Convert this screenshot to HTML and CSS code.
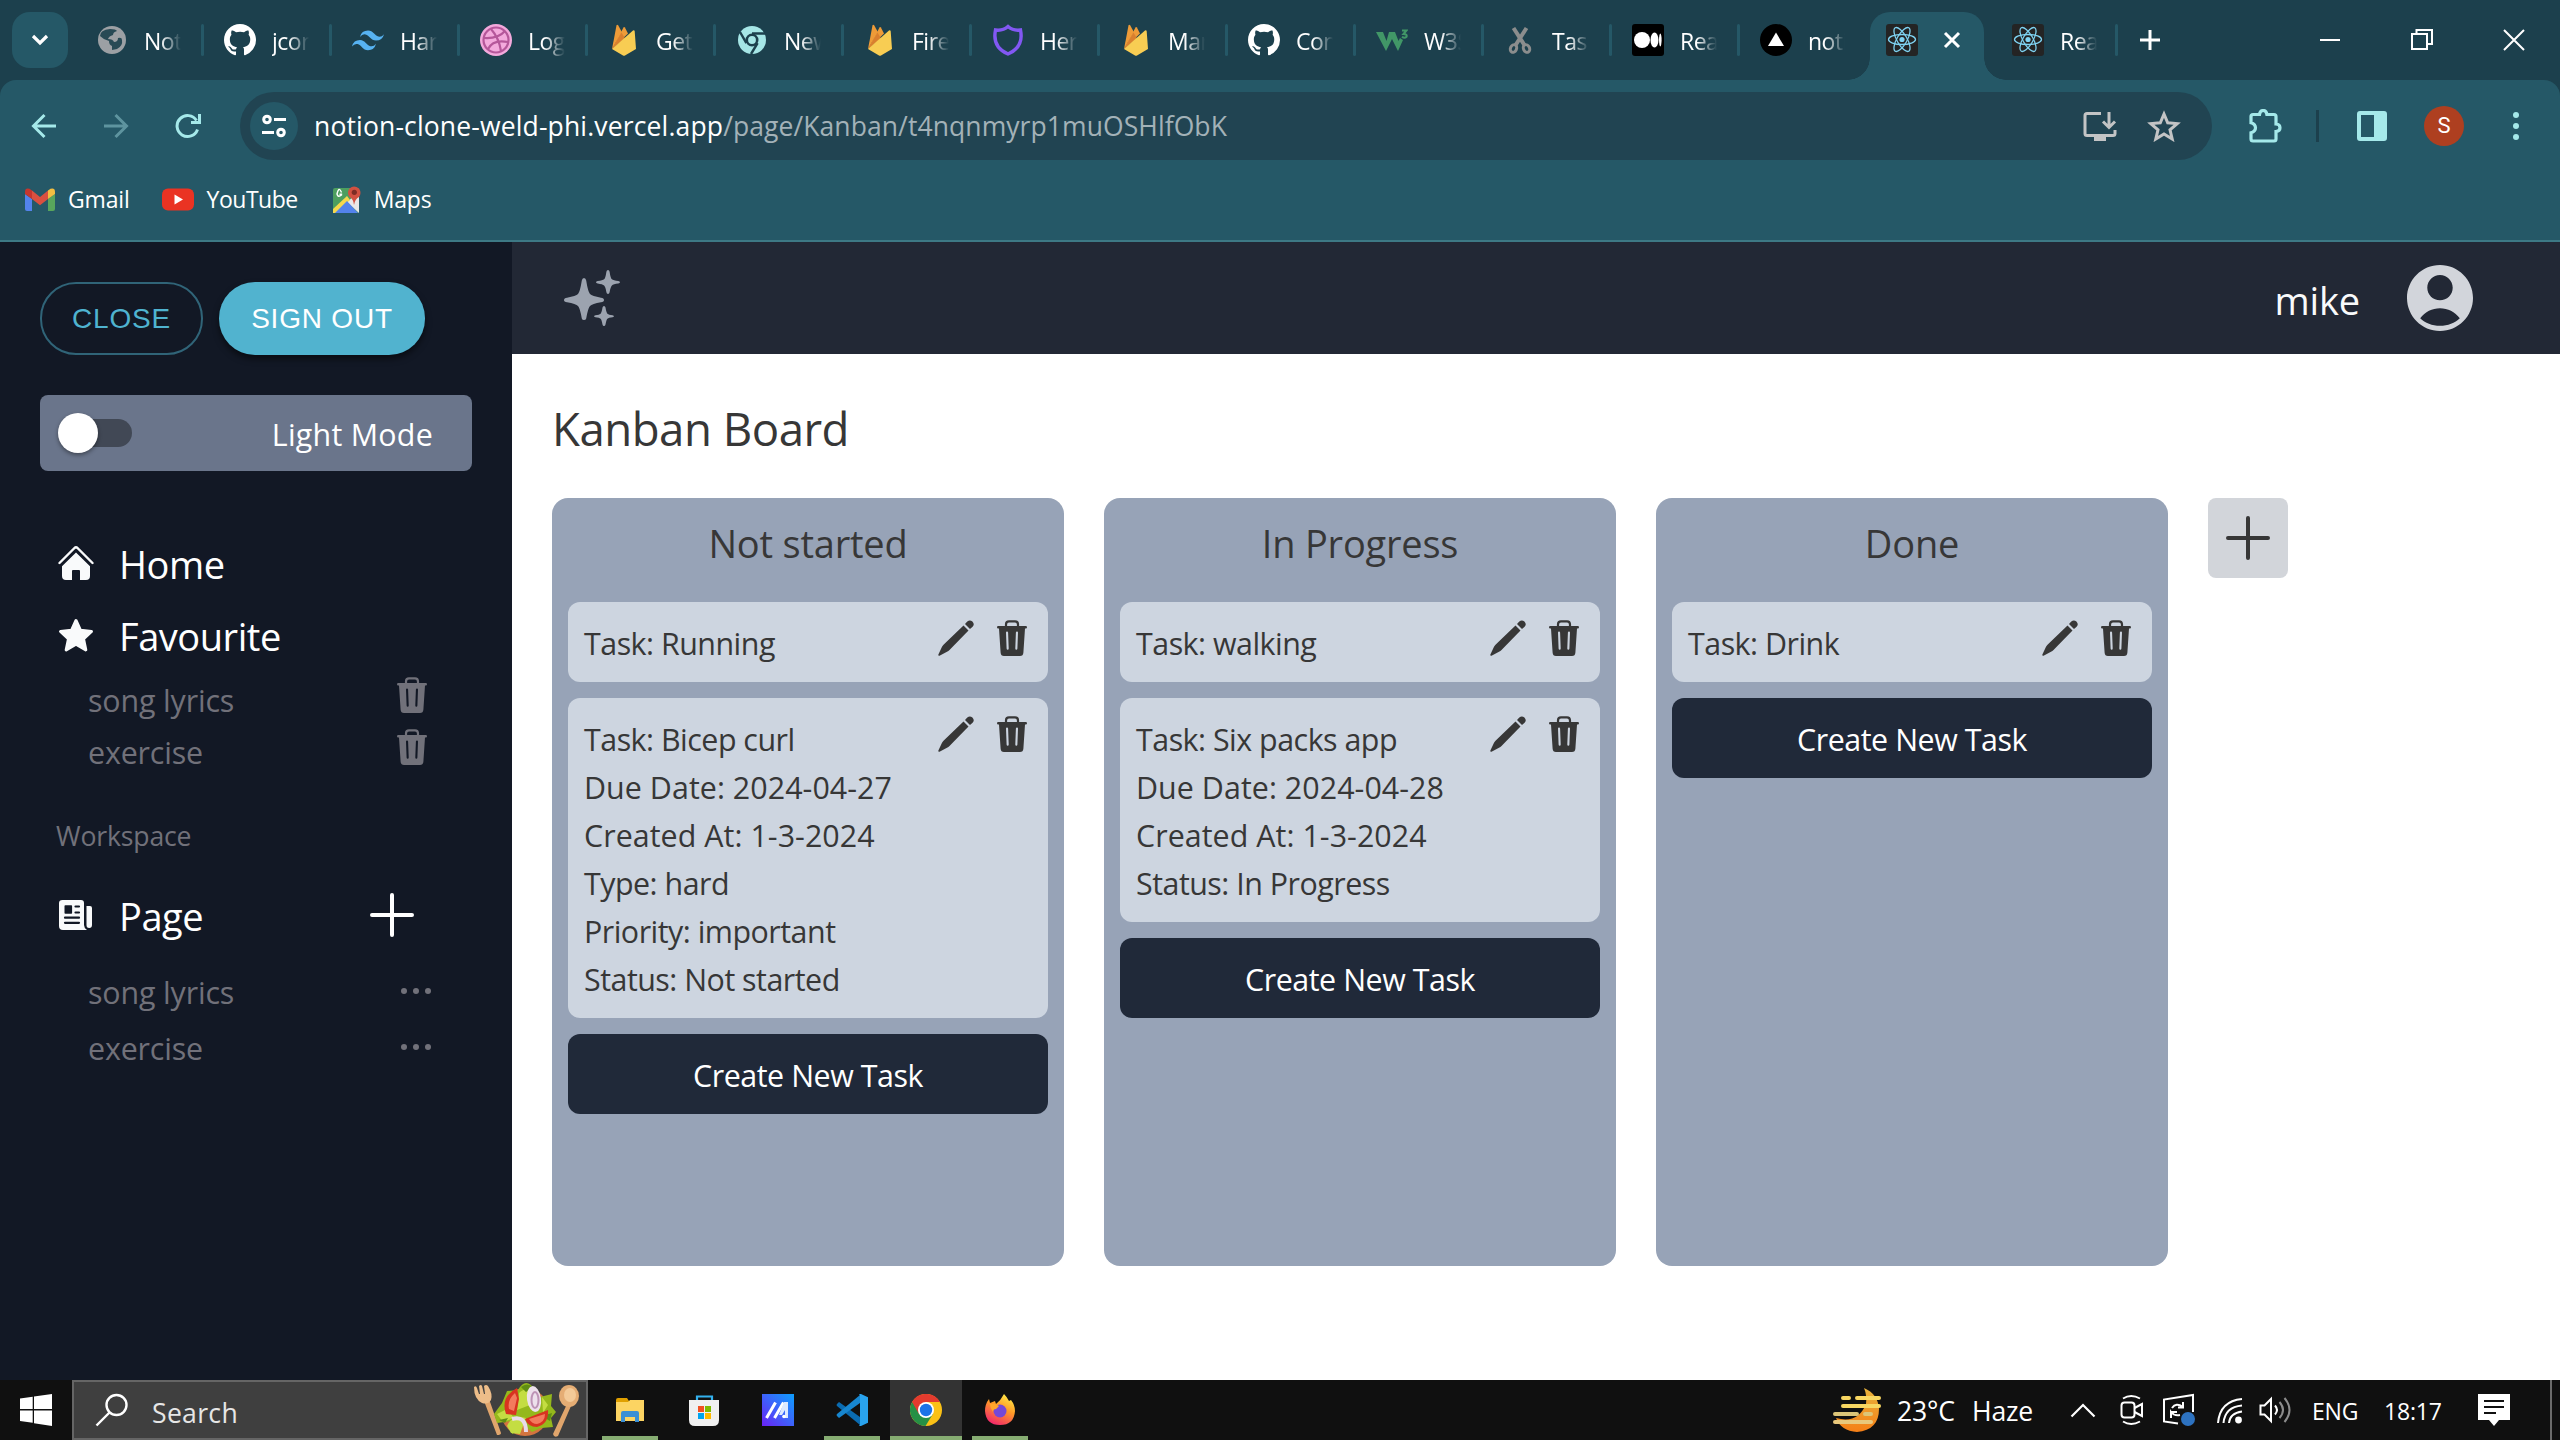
FILE: index.html
```html
<!DOCTYPE html>
<html lang="en">
<head>
<meta charset="utf-8">
<title>Kanban Board</title>
<link rel="stylesheet" href="styles.css">
</head>
<body>
<svg class="defs" width="0" height="0" aria-hidden="true">
  <symbol id="github" viewBox="0 0 16 16"><path fill="#fff" d="M8 0C3.58 0 0 3.58 0 8c0 3.54 2.29 6.53 5.47 7.59.4.07.55-.17.55-.38 0-.19-.01-.82-.01-1.49-2.01.37-2.53-.49-2.69-.94-.09-.23-.48-.94-.82-1.13-.28-.15-.68-.52-.01-.53.63-.01 1.08.58 1.23.82.72 1.21 1.87.87 2.33.66.07-.52.28-.87.51-1.07-1.78-.2-3.64-.89-3.64-3.95 0-.87.31-1.59.82-2.15-.08-.2-.36-1.02.08-2.12 0 0 .67-.21 2.2.82.64-.18 1.32-.27 2-.27s1.36.09 2 .27c1.53-1.04 2.2-.82 2.2-.82.44 1.1.16 1.92.08 2.12.51.56.82 1.27.82 2.15 0 3.07-1.87 3.75-3.65 3.95.29.25.54.73.54 1.48 0 1.07-.01 1.93-.01 2.2 0 .21.15.46.55.38A8.01 8.01 0 0 0 16 8c0-4.42-3.58-8-8-8z"/></symbol>
  <symbol id="firebase" viewBox="0 0 32 32"><path fill="#ee9b38" d="M4 25L8.500 1.500q.8-1.600 1.800 0l3.500 6.500z"/><path fill="#ee9b38" d="M4 25L15.500 3.500q.7-1 1.400 0L20 9.500z"/><path fill="#d97f2e" d="M4 25l9.500-16.500 3.500 6z"/><path fill="#f8cd53" d="M4 25L25 6.500q1.400-.8 1.700.7L28 25l-11 6.500q-1 .6-2 0z"/></symbol>
  <symbol id="react" viewBox="0 0 32 32"><rect width="32" height="32" rx="3" fill="#242424"/><g fill="none" stroke="#7fd3f2" stroke-width="1.300"><ellipse cx="16" cy="15.500" rx="13.500" ry="5"/><ellipse cx="16" cy="15.500" rx="13.500" ry="5" transform="rotate(60 16 15.500)"/><ellipse cx="16" cy="15.500" rx="13.500" ry="5" transform="rotate(120 16 15.500)"/></g><circle cx="16" cy="15.500" r="2.600" fill="#7fd3f2"/></symbol>
  <symbol id="trash" viewBox="0 0 30 36"><path fill="none" stroke="currentColor" stroke-width="2.200" d="M9 7V4.500Q9 1.300 12 1.300h6q3 0 3 3.200V7"/><path fill="currentColor" fill-rule="evenodd" d="M1.200 6h27.600q1.200 0 1.200 1.200t-1.200 1.300h-.8l-1.600 24Q26.200 36 23 36H7q-3.200 0-3.400-3.500L2 8.500h-.8Q0 8.400 0 7.200T1.200 6zM9 12.600l.6 16q.1 1.200 1.100 1.200t1-1.200l-.6-16q-.1-1-1.100-1t-1 1zm9.900 0l-.6 16q0 1.200 1 1.200t1.100-1.200l.6-16q0-1-1-1t-1.100 1z"/></symbol>
  <symbol id="pencil" viewBox="0 0 36 36"><path fill="currentColor" d="M25.500 5.500l5 5L11.500 30q-1 1-2.500 1.800L1.500 35.700Q0 36.200.4 34.500L4 26.800q.8-1.500 2-2.500zM27 4l2.300-2.400Q31.800-.6 34.400 1.600 37 4.300 34.600 6.800L32 9z"/></symbol>
  <symbol id="plus" viewBox="0 0 44 44"><path fill="none" stroke="currentColor" stroke-width="4" stroke-linecap="round" d="M22 2v40M2 22h40"/></symbol>
  <symbol id="dots" viewBox="0 0 30 6"><g fill="currentColor"><circle cx="3" cy="3" r="3"/><circle cx="15" cy="3" r="3"/><circle cx="27" cy="3" r="3"/></g></symbol>
</svg>

<div class="screen">
  <header class="browser">
    <div class="tabstrip">
      <span class="tab-search"><svg width="20" height="12" viewBox="0 0 20 12"><path d="M3 2l7 7 7-7" fill="none" stroke="#fff" stroke-width="3.200"/></svg></span>
      <div class="tab"><svg class="fav" viewBox="0 0 32 32"><circle cx="16" cy="16" r="14" fill="#9ca0a4"/><path fill="#1c404d" d="M14 5q6 0 7 2-4 1-4 4-4 1-5 4 5 0 6 3 4 0 4-4 4-1 4 2 1 6-5 9l-5 1v-4q-3-1-3-5-5-1-9-5 0-6 10-7z" opacity=".9"/></svg><span class="label">Notion</span></div>
      <div class="tab"><svg class="fav"><use href="#github"/></svg><span class="label">jcom</span></div>
      <div class="tab"><svg class="fav" viewBox="0 0 32 32"><path fill="#57b3f2" d="M16 6.500q-6.400 0-8 6.400 2.400-3.200 5.600-2.400c1.800.5 3.100 1.800 4.600 3.300 1.400 1.400 3.200 2.800 5.800 2.800q6.400 0 8-6.400-2.400 3.200-5.600 2.400c-1.800-.5-3.100-1.800-4.600-3.300-1.400-1.400-3.200-2.800-5.800-2.800zM8 16.100q-6.400 0-8 6.400 2.400-3.200 5.600-2.400c1.800.5 3.100 1.800 4.600 3.300 1.400 1.400 3.200 2.800 5.800 2.800q6.400 0 8-6.400-2.400 3.200-5.600 2.400c-1.800-.5-3.100-1.800-4.600-3.300-1.400-1.400-3.200-2.800-5.800-2.800z"/></svg><span class="label">Har</span></div>
      <div class="tab"><svg class="fav" viewBox="0 0 32 32"><circle cx="16" cy="16" r="16" fill="#f3a9dc"/><g fill="none" stroke="#b5579a" stroke-width="2.200"><circle cx="16" cy="16" r="12.500"/><path d="M11 5q8 9 10 22M4 14q14 1 21-7M8 25q5-10 20-7"/></g></svg><span class="label">Logo</span></div>
      <div class="tab"><svg class="fav"><use href="#firebase"/></svg><span class="label">Get s</span></div>
      <div class="tab"><svg class="fav" viewBox="0 0 32 32"><circle cx="16" cy="16" r="14" fill="#a5e6e6"/><circle cx="16" cy="16" r="5.200" fill="#a5e6e6" stroke="#1c404d" stroke-width="2.600"/><path stroke="#1c404d" stroke-width="2.400" fill="none" d="M16 9.500h13M10.400 19.200L4 8M21.600 19.200L15 30"/></svg><span class="label">New</span></div>
      <div class="tab"><svg class="fav"><use href="#firebase"/></svg><span class="label">Fireb</span></div>
      <div class="tab"><svg class="fav" viewBox="0 0 32 32"><path fill="none" stroke="#8258f3" stroke-width="3.400" d="M16 2.500q5 4.500 12.500 3.500 3.500 17-12.500 24Q0 23 3.500 6 11 7 16 2.500z"/></svg><span class="label">Hero</span></div>
      <div class="tab"><svg class="fav"><use href="#firebase"/></svg><span class="label">Man</span></div>
      <div class="tab"><svg class="fav"><use href="#github"/></svg><span class="label">Com</span></div>
      <div class="tab"><svg class="fav" viewBox="0 0 32 32"><path fill="#419767" d="M0 8h7l3.500 9L13 8h6l3.500 9 1.500-3 3 2-5 11-6-12-6 12z"/><path fill="none" stroke="#419767" stroke-width="2" d="M26 6.500h4.500l-3 3.500q4 0 3 2.800-2 2-4.500 0"/></svg><span class="label">W3S</span></div>
      <div class="tab"><svg class="fav" viewBox="0 0 32 32"><g fill="none" stroke="#8b8d8d" stroke-width="3"><path d="M9.500 4L21 22M22.500 4L11 22" stroke-width="4"/><ellipse cx="9.500" cy="24.500" rx="3" ry="4" transform="rotate(25 9.500 24.500)"/><ellipse cx="22.500" cy="24.500" rx="3" ry="4" transform="rotate(-25 22.500 24.500)"/></g></svg><span class="label">Task</span></div>
      <div class="tab"><svg class="fav" viewBox="0 0 32 32"><rect width="32" height="32" rx="3"/><g fill="#fff"><circle cx="10" cy="16" r="8"/><ellipse cx="22.500" cy="16" rx="4" ry="7.500"/><ellipse cx="28.300" cy="16" rx="1.300" ry="6.500"/></g></svg><span class="label">Rea</span></div>
      <div class="tab no-sep"><svg class="fav" viewBox="0 0 32 32"><circle cx="16" cy="16" r="16"/><path fill="#fff" d="M16 8.500l8 13.500H8z"/></svg><span class="label">noti</span></div>
      <div class="tab-active"><svg class="fav"><use href="#react"/></svg><svg width="18" height="18" viewBox="0 0 18 18"><path d="M2 2l14 14M16 2L2 16" stroke="#fff" stroke-width="3"/></svg></div>
      <div class="tab tab-last"><svg class="fav"><use href="#react"/></svg><span class="label">Rea</span></div>
      <svg class="new-tab" width="22" height="22" viewBox="0 0 22 22"><path d="M11 1v20M1 11h20" stroke="#fff" stroke-width="3"/></svg>
      <div class="window-controls">
        <svg width="22" height="22" viewBox="0 0 22 22"><path d="M1 11h20" stroke="#fff" stroke-width="2"/></svg>
        <svg width="22" height="22" viewBox="0 0 22 22"><path d="M1 5h15v15H1zM5.500 5V1H21v14h-4.500" fill="none" stroke="#fff" stroke-width="2"/></svg>
        <svg width="22" height="22" viewBox="0 0 22 22"><path d="M1 1l20 20M21 1L1 21" stroke="#fff" stroke-width="2"/></svg>
      </div>
    </div>
    <div class="toolbar">
      <div class="nav-buttons">
        <svg width="26" height="26" viewBox="0 0 26 26"><path d="M25 13H3M13.500 2L2.500 13l11 11" fill="none" stroke="#a5e9ea" stroke-width="3"/></svg>
        <svg width="26" height="26" viewBox="0 0 26 26"><path d="M1 13h22M12.500 2l11 11-11 11" fill="none" stroke="#5e949f" stroke-width="3"/></svg>
        <svg width="26" height="26" viewBox="0 0 26 26"><path d="M22.500 16.500A10.500 10.500 0 1 1 21.500 7.500M24.500 1v8.500H16" fill="none" stroke="#a5e9ea" stroke-width="3"/></svg>
      </div>
      <div class="omnibox">
        <span class="site-info"><svg width="24" height="24" viewBox="0 0 24 24"><g fill="none" stroke="#fff" stroke-width="3"><circle cx="5" cy="5.500" r="3.300"/><path d="M12 5.500h12M0 18.500h12"/><circle cx="19" cy="18.500" r="3.300"/></g></svg></span>
        <span class="url"><span class="host">notion-clone-weld-phi.vercel.app</span><span class="path">/page/Kanban/t4nqnmyrp1muOSHlfObK</span></span>
        <span class="omni-icons">
          <svg width="34" height="30" viewBox="0 0 34 30"><path fill="none" stroke="#c3c4c5" stroke-width="3" d="M18 2.500H4Q2 2.500 2 4.500v18q0 2 2 2h26q2 0 2-2V19M26 1v15M20 10.500l6 6 6-6"/><path fill="#c3c4c5" d="M11 25h12v5H11z"/></svg>
          <svg width="34" height="32" viewBox="0 0 34 32"><path fill="none" stroke="#c3c4c5" stroke-width="3" stroke-linejoin="miter" d="M17 4l3.700 8.800 9.500.8-7.200 6.200 2.200 9.200L17 24l-8.200 5 2.200-9.200-7.200-6.200 9.500-.8z"/></svg>
        </span>
      </div>
      <div class="actions">
        <svg width="34" height="34" viewBox="0 0 34 34"><path fill="none" stroke="#a5e9ea" stroke-width="3.200" d="M3 7.500Q3 5.500 5 5.500h6.500q.5-4 3.700-4t3.700 4H26q2 0 2 2V15q4 .3 4 3.700t-4 3.800V30q0 2-2 2H5q-2 0-2-2v-6.200q4.500-1.300 4.500-5T3 13.700z"/></svg>
        <i class="bar"></i>
        <svg width="30" height="30" viewBox="0 0 30 30"><path fill="#a5e9ea" fill-rule="evenodd" d="M3 0h24q3 0 3 3v24q0 3-3 3H3q-3 0-3-3V3q0-3 3-3zm1 4v22h13V4z"/></svg>
        <span class="profile">S</span>
        <svg width="6" height="30" viewBox="0 0 6 30"><g fill="#a5e9ea"><circle cx="3" cy="4" r="3"/><circle cx="3" cy="15" r="3"/><circle cx="3" cy="26" r="3"/></g></svg>
      </div>
    </div>
    <div class="bookmarks">
      <svg width="30" height="24" viewBox="0 0 30 24"><path fill="#5383ec" d="M0 6l7 5v12H2q-2 0-2-2z"/><path fill="#58a55c" d="M23 11l7-5v15q0 2-2 2h-5z"/><path fill="#c5362e" d="M0 6V4Q0-.5 4.500.8L7 2.500V11L0 6z"/><path fill="#d95040" d="M7 2.500l8 6.500 8-6.500V11l-8 6.300L7 11z"/><path fill="#f2be42" d="M23 11V2.500L25.500.8Q30-.5 30 4v2z"/></svg><span class="gmail">Gmail</span>
      <svg width="32" height="24" viewBox="0 0 32 24"><rect y=".5" width="32" height="22" rx="6" fill="#ea3323"/><path fill="#fff" d="M12.500 6.500v10l8.500-5z"/></svg><span class="youtube">YouTube</span>
      <svg width="28" height="28" viewBox="0 0 28 28"><rect y="2" width="26" height="25" rx="2" fill="#4d9e5f"/><path fill="#e8e8e8" d="M14 16L26 6v21z"/><path fill="#f6d84c" d="M0 27v-4L14 10l3 4L3 27z"/><path fill="#5383ec" d="M2 27l12-12 11 12z"/><path fill="none" stroke="#fff" stroke-width="1.400" d="M8.500 6.500Q6-.5 4 8q1 4 4.500 1V8.200H6.500"/><path fill="#d15141" d="M21 19q-.5-6-4.500-8-3-4 0-8.500Q21-1.500 26 2.500q3 4.500 0 8.500-4 2-5 8z"/><circle cx="21.300" cy="6.300" r="2.600" fill="#7d2d26"/></svg><span>Maps</span>
    </div>
  </header>

  <div class="app">
    <aside class="sidebar">
      <div class="buttons"><button class="btn outlined">CLOSE</button><button class="btn contained">SIGN OUT</button></div>
      <div class="mode"><span class="switch"><i class="thumb"></i></span><span class="mode-label">Light Mode</span></div>
      <nav class="menu">
        <div class="item"><svg width="36" height="34" viewBox="0 0 36 34"><path fill="none" stroke="#f9fafb" stroke-width="2.400" stroke-linecap="round" stroke-linejoin="round" d="M1.500 17L16.500 2q1.500-1.300 3 0L34.500 17"/><path fill="#f9fafb" d="M18 6.500l14 13.800V30q0 4-4 4h-6v-9q0-1-1-1h-6q-1 0-1 1v9H8q-4 0-4-4v-9.700z"/></svg><span>Home</span></div>
        <div class="item"><svg width="36" height="34" viewBox="0 0 36 34"><path fill="#f9fafb" stroke="#f9fafb" stroke-width="3" stroke-linejoin="round" d="M18 2.500l4.500 9.800 11 1.200-8 7.400 2.300 11L18 26.300l-9.800 5.600 2.300-11-8-7.400 11-1.200z"/></svg><span>Favourite</span></div>
        <div class="sub fav-sub"><span>song lyrics</span><svg width="30" height="36"><use href="#trash"/></svg></div>
        <div class="sub fav-sub"><span>exercise</span><svg width="30" height="36"><use href="#trash"/></svg></div>
        <div class="caption">Workspace</div>
        <div class="item"><svg width="36" height="32" viewBox="0 0 36 32"><path fill="#f9fafb" fill-rule="evenodd" d="M4.500 1H23q3 0 3 3v22q0 3 3 5H5q-4 0-4-4V4q0-3 3.500-3zM6.500 7v7q0 .8.800.8h6q.8 0 .8-.8V7q0-.8-.8-.8h-6q-.8 0-.8.800z"/><path stroke="#121825" stroke-width="2.200" stroke-linecap="round" d="M17.500 7.500h3.500M17.500 13.500h3.500M7 18.700h14M7 23.800h14"/><path fill="#f9fafb" d="M28.500 7h3.500q2 0 2 2v17q0 3-2.800 3t-2.700-3z"/></svg><span>Page</span><svg class="add" width="44" height="44"><use href="#plus"/></svg></div>
        <div class="sub page-sub first"><span>song lyrics</span><svg width="30" height="6"><use href="#dots"/></svg></div>
        <div class="sub page-sub"><span>exercise</span><svg width="30" height="6"><use href="#dots"/></svg></div>
      </nav>
    </aside>
    <main class="main">
      <div class="topbar">
        <svg width="56" height="56" viewBox="0 0 56 56"><path fill="#9ca3af" d="M20 8q1.800 0 2.200 2.600Q24 22 26 24t11 3.700q3 .3 3 2.300t-3 2.300Q28 34 26 36t-3.800 12.500Q21.800 50 20 50t-2.200-1.500Q16 38 14 36T3 32.300Q0 32 0 30t3-2.300Q12 26 14 24t3.800-13.400Q18.200 8 20 8zM44 0q1.300 0 1.600 1.700.9 6.300 2.300 7.600t6.400 1.800q1.700.3 1.700 1.200t-1.700 1.200q-5 .6-6.400 2t-2.300 6.800Q45.300 24 44 24t-1.600-1.700q-.9-5.500-2.300-6.800t-6.400-2Q32 13.200 32 12.300t1.700-1.200q5-.5 6.400-1.800t2.300-7.600Q42.700 0 44 0zM40 36q1.200 0 1.500 1.500.8 5 1.900 6.200t5.200 1.500q1.400.3 1.400 1t-1.400 1q-4.100.4-5.200 1.500t-1.900 5.800Q41.200 56 40 56t-1.500-1.500q-.8-4.700-1.900-5.800t-5.200-1.500q-1.400-.3-1.400-1t1.400-1q4.100-.3 5.200-1.500t1.900-6.200Q38.800 36 40 36z"/></svg>
        <div class="user"><span>mike</span><svg width="66" height="66" viewBox="2 2 20 20"><path fill="#d2d5db" d="M12 2C6.480 2 2 6.480 2 12s4.480 10 10 10 10-4.480 10-10S17.520 2 12 2zm0 3c2.120 0 3.850 1.730 3.850 3.900S14.120 12.700 12 12.700 8.150 11.070 8.150 8.900 9.880 5 12 5zm0 15.400c-2.400 0-4.500-.9-6-2.300 1.500-1.900 3.600-3 6-3s4.500 1.100 6 3c-1.500 1.400-3.600 2.300-6 2.300z"/></svg></div>
      </div>
      <h1>Kanban Board</h1>
      <div class="board">
        <section class="column"><h2>Not started</h2>
          <article class="card"><div class="fields"><p>Task: Running</p></div><div class="tools"><svg width="36" height="36"><use href="#pencil"/></svg><svg width="30" height="36"><use href="#trash"/></svg></div></article>
          <article class="card"><div class="fields"><p>Task: Bicep curl</p><p class="date">Due Date: 2024-04-27</p><p class="date">Created At: 1-3-2024</p><p>Type: hard</p><p>Priority: important</p><p>Status: Not started</p></div><div class="tools"><svg width="36" height="36"><use href="#pencil"/></svg><svg width="30" height="36"><use href="#trash"/></svg></div></article>
          <button class="create">Create New Task</button></section>
        <section class="column"><h2>In Progress</h2>
          <article class="card"><div class="fields"><p>Task: walking</p></div><div class="tools"><svg width="36" height="36"><use href="#pencil"/></svg><svg width="30" height="36"><use href="#trash"/></svg></div></article>
          <article class="card"><div class="fields"><p>Task: Six packs app</p><p class="date">Due Date: 2024-04-28</p><p class="date">Created At: 1-3-2024</p><p>Status: In Progress</p></div><div class="tools"><svg width="36" height="36"><use href="#pencil"/></svg><svg width="30" height="36"><use href="#trash"/></svg></div></article>
          <button class="create">Create New Task</button></section>
        <section class="column"><h2>Done</h2>
          <article class="card"><div class="fields"><p>Task: Drink</p></div><div class="tools"><svg width="36" height="36"><use href="#pencil"/></svg><svg width="30" height="36"><use href="#trash"/></svg></div></article>
          <button class="create">Create New Task</button></section>
        <button class="add-column"><svg width="44" height="44"><use href="#plus"/></svg></button>
      </div>
    </main>
  </div>

  <footer class="taskbar">
    <div class="start"><svg width="32" height="32" viewBox="0 0 32 32"><path fill="#fff" d="M0 4.500L12.700 2.700V15H0zM14 2.500L32 0v15H14zM0 16.400h12.700v12.300L0 27zM14 16.400h18V32l-18-2.700z"/></svg></div>
    <div class="search">
      <svg width="34" height="34" viewBox="0 0 34 34"><circle cx="21.500" cy="12" r="10" fill="none" stroke="#fff" stroke-width="2.400"/><path d="M14.500 19.500L1.500 32.500" stroke="#fff" stroke-width="2.400"/></svg>
      <span class="search-text">Search</span>
      <svg class="salad" width="106" height="54" viewBox="0 0 106 54">
        <path fill="#e0a56c" d="M11 18l5-2 12 34q0 2-4 2zM80 51l14-30 4 2-13 30q-4 2-5-2z"/>
        <path fill="#edbd89" d="M1 4q2-2 3 1l2 6 1 0-1-8q2-2 3 0l2 8h1l-1-8q2-2 4 0 5 8 3 14-3 5-9 3Q1 16 1 4z"/><ellipse cx="96" cy="13" rx="10" ry="11" fill="#e5ad74"/><ellipse cx="97" cy="12" rx="6" ry="7" fill="#f3ca98"/>
        <circle cx="52" cy="29" r="24" fill="#d4743f"/>
        <path fill="#95b81c" d="M34 8l11-1q8-14 17 0l1 8 16-4-1 12 5 6-5 6 2 9-12 1-9 4-11-9-2 8-7 3-1-13-14 2-3-9 8-11z"/>
        <path fill="#c4dd42" d="M46 10q8-8 14 2l-3 10-13 5zM34 43q5-12 19-8l-6 16-9-1zM69 14l6 8-5 8zM24 31l10-5 7 9-11 4z"/><path fill="#5f8d14" d="M48 4q6-5 12 0l-7 5zM69 33l10-3-2 8zM26 37l9-2-3 5z"/>
        <path fill="#d83320" d="M44 5Q27 14 33 31l10 1 3-16zM52 36l23-9q1 14-11 17-9 0-12-8z"/><path fill="#f37b5d" d="M42 10q-8 7-6 16l5 2 3-13zM56 36l16-5q0 8-8 10-5 0-8-5z"/>
        <ellipse cx="61" cy="16" rx="7" ry="13" fill="#ede1ec" transform="rotate(-8 61 16)"/><ellipse cx="62" cy="17" rx="3.500" ry="8" fill="none" stroke="#bd94b6" stroke-width="2"/><path fill="none" stroke="#e8dbea" stroke-width="4" d="M39 36q14-4 14 13"/>
      </svg>
    </div>
    <div class="pinned">
      <span class="pin run"><svg width="32" height="32" viewBox="0 0 32 32"><path fill="#e0a000" d="M2 6q0-2 2-2h9l2 3v5H2z"/><path fill="#fcd462" d="M2 8h12l2-2h14v21H2z"/><path fill="#3b8fd4" d="M7 19q0-2 2-2h14q2 0 2 2v9h-4v-5H11v5H7z"/></svg></span>
      <span class="pin"><svg width="32" height="32" viewBox="0 0 32 32"><path fill="none" stroke="#33b1ee" stroke-width="2.200" d="M9 7V2.500h15V7"/><path fill="#f0f0f0" d="M1 6h30v20q0 6-6 6H7q-6 0-6-6z"/><path fill="#f25022" d="M10 12h6v6h-6z"/><path fill="#7fba00" d="M17 12h6v6h-6z"/><path fill="#00a4ef" d="M10 19h6v6h-6z"/><path fill="#ffb900" d="M17 19h6v6h-6z"/></svg></span>
      <span class="pin"><svg width="32" height="32" viewBox="0 0 32 32"><defs><linearGradient id="mi" x1="0" y1="1" x2="1" y2="0"><stop offset="0" stop-color="#6a22f5"/><stop offset=".5" stop-color="#3d62fb"/><stop offset="1" stop-color="#0c9ffd"/></linearGradient></defs><path fill="url(#mi)" d="M0 0h32v32H0z"/><path stroke="#fff" stroke-width="3" d="M4.500 24L13.500 8.500M12.500 24l9-15.500"/><path fill="#dce9ff" d="M22 8h4v16h-3v-8l-3 5h-3z"/><circle cx="22" cy="22.500" r="1.800" fill="#fff"/></svg></span>
      <span class="pin run"><svg width="32" height="32" viewBox="0 0 32 32"><path fill="#0a6bb0" d="M1 10l2-2 21 15v8L1 12q-1-1 0-2z"/><path fill="#1786cf" d="M1 22l2 2 21-15V1L1 20q-1 1 0 2z"/><path fill="#29a3ee" d="M23 0h2l7 3.200v25.600L25 32h-2q1-1 1-2V2q0-1-1-2z"/></svg></span>
      <span class="pin wide"><svg width="32" height="32" viewBox="0 0 32 32"><circle cx="16" cy="16" r="16" fill="#fbc116"/><path fill="#269045" d="M16 16L2.100 8A16 16 0 0 0 15.500 32l7.400-12z"/><path fill="#e33b2e" d="M2.100 8A16 16 0 0 1 29.900 8H16l-7 12z"/><circle cx="16" cy="16" r="8" fill="#fff"/><circle cx="16" cy="16" r="6.200" fill="#1b73e8"/></svg></span>
      <span class="pin run"><svg width="32" height="32" viewBox="0 0 32 32"><defs><linearGradient id="fx" x1=".8" y1="0" x2=".3" y2="1"><stop offset="0" stop-color="#fff14a"/><stop offset=".45" stop-color="#ff9a27"/><stop offset="1" stop-color="#f3256c"/></linearGradient></defs><path fill="url(#fx)" d="M20 0q3 3 5 7l2-1q4 5 4 11-1 14-15 14T1 17Q1 10 5 5l1 4 5-2 1 3q5-4 8-10z"/><circle cx="16" cy="17" r="6.500" fill="#7548d8"/><path fill="#ffa62b" d="M6 10q5-1 9 2l-3 3q-3 0-3 3-3-4-3-8z"/></svg></span>
    </div>
    <div class="tray">
      <svg class="t-weather" width="48" height="44" viewBox="0 0 48 44"><defs><linearGradient id="hz" x1="0" y1="0" x2="0" y2="1"><stop offset="0" stop-color="#e8b33c"/><stop offset="1" stop-color="#f57f17"/></linearGradient></defs><path fill="url(#hz)" d="M31 0q14 6 15 21 0 21-22 23Q8 43 3 30q22 6 30-14 1-9-2-16z"/><g stroke-width="4" stroke-linecap="round"><path stroke="#f8d762" d="M10 10h6M24 10h22M10 18h36"/><path stroke="#dcc578" d="M2 26h22M32 26h6"/><path stroke="#e9c87c" d="M2 34h36"/></g></svg>
      <span class="t-temp">23°C</span><span class="t-haze">Haze</span>
      <svg class="t-chev" width="26" height="15" viewBox="0 0 26 15"><path d="M1.500 13.500L13 2l11.500 11.500" fill="none" stroke="#fff" stroke-width="2.200"/></svg>
      <svg class="t-cam" width="24" height="32" viewBox="0 0 24 32"><g fill="none" stroke="#fff" stroke-width="2"><path d="M3 4.500q8-5 17 0M3 27.500q8 5 17 0"/><rect x="1.500" y="8.500" width="13" height="15" rx="3"/><path d="M14.500 14l7.500-4v12l-7.500-4"/></g></svg>
      <svg class="t-sync" width="34" height="34" viewBox="0 0 34 34"><path fill="none" stroke="#fff" stroke-width="2" d="M31 19V2L2 6.500v22l14 2"/><path fill="none" stroke="#fff" stroke-width="2" d="M10 15q4-6 11-1M21 9v5.500h-5M18 22q-6 1-9-3v6M9 19h6"/><circle cx="26" cy="26" r="7" fill="#2d72c0"/></svg>
      <svg class="t-wifi" width="26" height="28" viewBox="0 0 26 28"><g fill="none" stroke="#fff" stroke-width="2"><path d="M1 27Q3 5 25 3M6.500 27Q8 11 25 9.500M12 27q1-10 13-11.500"/></g><circle cx="21.500" cy="24" r="3.400" fill="#fff"/></svg>
      <svg class="t-vol" width="33" height="28" viewBox="0 0 33 28"><path fill="none" stroke="#fff" stroke-width="2" d="M1.500 9.500h4L12 3v22l-6.500-6.500h-4zM16 9.500q4 4.500 0 9"/><path fill="none" stroke="#8c8c8c" stroke-width="2" d="M20.500 6q7 8 0 16M25.500 2q10 12 0 24"/></svg>
      <span class="t-lang">ENG</span><span class="t-time">18:17</span>
      <svg class="t-note" width="32" height="32" viewBox="0 0 32 32"><path fill="#fff" d="M0 0h32v26H21l-5 6-5-6H0z"/><path stroke="#101010" stroke-width="2" d="M6 7h20M6 13h20M6 19h12"/></svg>
      <i class="peek"></i>
    </div>
  </footer>
</div>
</body>
</html>
```
FILE: styles.css
```css
* { box-sizing: border-box; }
body { margin: 0; background: #fff; font-family: "Open Sans", "Noto Sans", sans-serif; letter-spacing: -0.01em; }
svg { display: block; flex: none; }
h1, h2, p { margin: 0; font-weight: 400; }
button { font: inherit; letter-spacing: inherit; border: 0; padding: 0; }
.defs { position: absolute; }
.screen { width: 2560px; height: 1440px; display: flex; flex-direction: column; overflow: hidden; }

/* browser frame */
.browser { height: 242px; background: #1c404d; border-bottom: 2px solid #3d7985; color: #fff; flex: none; }
.tabstrip { height: 80px; display: flex; align-items: center; padding-left: 12px; }
.tab-search { width: 56px; height: 56px; margin-right: 8px; border-radius: 18px; background: #255867; display: flex; align-items: center; justify-content: center; }
.fav { width: 32px; height: 32px; }
.tab { width: 128px; height: 56px; padding-left: 20px; display: flex; align-items: center; font-size: 23px; flex: none; }
.label { width: 37px; margin-left: 16px; padding-top: 2px; overflow: hidden; white-space: nowrap; letter-spacing: -0.5px; -webkit-mask-image: linear-gradient(90deg, #000 45%, transparent); mask-image: linear-gradient(90deg, #000 45%, transparent); }
.tab::after { content: ""; width: 3px; height: 32px; margin-left: 20px; border-radius: 2px; background: #255867; }
.no-sep::after { visibility: hidden; }
.tab-active { position: relative; width: 114px; height: 68px; margin: 12px 8px 0 2px; padding: 0 23px 12px 16px; border-radius: 20px 20px 0 0; background: #255867; display: flex; align-items: center; justify-content: space-between; }
.tab-active::before, .tab-active::after { content: ""; position: absolute; bottom: 0; width: 22px; height: 22px; }
.tab-active::before { left: -22px; background: radial-gradient(circle at 0 0, transparent 21.500px, #255867 22px); }
.tab-active::after { right: -22px; background: radial-gradient(circle at 100% 0, transparent 21.500px, #255867 22px); }
.tab-last::after { margin-left: 18px; }
.new-tab { margin-left: 19px; }
.window-controls { margin-left: auto; padding-right: 35px; display: flex; gap: 70px; }
.toolbar { height: 92px; padding: 12px 41px 12px 31px; background: #255867; border-radius: 16px 16px 0 0; display: flex; align-items: center; }
.nav-buttons { display: flex; gap: 46px; }
.omnibox { width: 1972px; height: 68px; margin-left: 39px; padding: 0 31px 0 10px; border-radius: 34px; background: #214452; display: flex; align-items: center; }
.site-info { width: 48px; height: 48px; border-radius: 50%; background: #255867; display: flex; align-items: center; justify-content: center; }
.url { margin-left: 16px; font-size: 26.500px; white-space: nowrap; }
.host { letter-spacing: 0.150px; }
.path { color: #a3b2b8; letter-spacing: 0.080px; }
.omni-icons { margin-left: auto; display: flex; align-items: center; gap: 30px; }
.actions { margin-left: 36px; display: flex; align-items: center; }
.actions .bar { width: 3px; height: 32px; margin: 0 38px 0 34px; background: #1c404d; }
.profile { width: 40px; height: 40px; margin: 0 49px 0 37px; border-radius: 50%; background: #ae3f20; font: 22px/40px Roboto, sans-serif; text-align: center; }
.bookmarks { height: 68px; padding: 0 0 12px 25px; background: #255867; display: flex; align-items: center; gap: 13px; font-size: 23px; }
.bookmarks span { margin-top: -2px; }
.bookmarks .gmail { margin-right: 19px; }
.bookmarks .youtube { margin-right: 22px; letter-spacing: -0.500px; }

/* sidebar */
.app { flex: 1; display: flex; min-height: 0; }
.sidebar { width: 512px; padding: 40px; background: #121825; color: #fff; }
.buttons { display: flex; gap: 16px; }
.btn { height: 73px; border-radius: 36px; font: 28px "Liberation Sans", Arial, sans-serif; letter-spacing: .8px; text-align: center; }
.outlined { width: 163px; border: 2px solid #306478; color: #4fb3d0; background: none; }
.contained { width: 206px; background: #51b3cf; color: #fff; box-shadow: 0 4px 6px rgba(0, 0, 0, .5); }
.mode { height: 76px; margin-top: 40px; padding: 0 39px 0 24px; background: #6a758b; border-radius: 8px; display: flex; align-items: center; justify-content: space-between; font-size: 30.400px; }
.mode-label { padding-top: 3px; letter-spacing: .25px; }
.switch { width: 68px; height: 28px; border-radius: 14px; background: #414855; display: flex; align-items: center; }
.thumb { width: 40px; height: 40px; margin-left: -6px; border-radius: 50%; background: #fff; box-shadow: 0 2px 4px rgba(0, 0, 0, .4); }
.menu { margin-top: 56px; }
.item { height: 72px; padding: 0 58px 0 18px; display: flex; align-items: center; font-size: 38px; line-height: 72px; }
.item span { margin-left: 25px; padding-top: 2px; letter-spacing: -0.450px; }
.item .add { margin-left: auto; }
.sub { padding-left: 48px; display: flex; align-items: center; justify-content: space-between; color: #71717a; font-size: 30.400px; letter-spacing: -0.150px; }
.sub span { padding-top: 3px; }
.fav-sub { height: 52px; padding-right: 45px; }
.item + .fav-sub { margin-top: 2px; }
.fav-sub svg { margin-bottom: 9px; }
.caption { height: 48px; margin: 33px 0 21px 16px; padding-top: 2px; color: #71717a; font-size: 26.600px; line-height: 48px; }
.page-sub { height: 56px; padding-right: 41px; }
.first { margin-top: 12px; }

/* board */
.main { flex: 1; background: #fff; color: #373737; }
.topbar { height: 112px; padding: 0 87px 0 52px; background: #222835; display: flex; align-items: center; justify-content: space-between; }
.user { display: flex; align-items: center; gap: 47px; color: #f9fafb; font-size: 38px; }
.user span { padding-top: 3px; }
h1 { margin: 40px 0 40px 40px; height: 64px; padding-top: 2px; font-size: 45.600px; line-height: 64px; letter-spacing: -0.500px; }
.board { margin-left: 40px; display: flex; gap: 40px; align-items: flex-start; }
.column { width: 512px; height: 768px; padding: 16px; border-radius: 16px; background: #97a3b7; display: flex; flex-direction: column; gap: 16px; }
h2 { height: 72px; font-size: 38px; line-height: 58px; text-align: center; letter-spacing: -0.200px; }
.card { padding: 16px; border-radius: 12px; background: #cdd5e0; display: flex; justify-content: space-between; font-size: 30.400px; }
.fields p { height: 48px; padding-top: 2px; line-height: 48px; white-space: nowrap; letter-spacing: -0.500px; }
.fields .date { letter-spacing: 0.050px; }
.tools { display: flex; gap: 23px; padding: 2px 5px 0 0; }
.create { height: 80px; padding-top: 2px; border-radius: 12px; background: #202939; color: #fff; font-size: 30.400px; letter-spacing: -0.450px; }
.add-column { width: 80px; height: 80px; border-radius: 8px; background: #d2d5da; color: #373737; display: flex; align-items: center; justify-content: center; }

/* taskbar */
.taskbar { height: 60px; flex: none; display: flex; background: #101010; color: #fff; }
.start { width: 72px; display: flex; align-items: center; padding-left: 20px; }
.search { width: 516px; border: 2px solid #656565; background: #3f3f3f; display: flex; align-items: center; padding: 0 7px 0 21px; color: #e6e6e6; font-size: 26.600px; }
.search-text { margin-left: 23px; padding-top: 5px; letter-spacing: .3px; }
.salad { margin-left: auto; }
.pinned { margin-left: 5px; display: flex; }
.pin { width: 74px; height: 60px; padding-top: 14px; display: flex; flex-direction: column; align-items: center; }
.pin svg { margin-bottom: 10px; }
.run::after { content: ""; width: 56px; height: 4px; background: #86ad72; }
.wide { width: 72px; margin: 0 1px; background: #333; border-bottom: 4px solid #86ad72; }
.tray { margin-left: auto; display: flex; align-items: center; white-space: nowrap; font-size: 26.600px; }
.tray span { padding-top: 2px; }
.t-temp { width: 75px; margin-left: 16px; }
.t-haze { width: 98px; }
.t-cam { margin-left: 24px; }
.t-sync { margin-left: 18px; }
.t-wifi { margin-left: 21px; }
.t-vol { margin-left: 16px; }
.t-lang { width: 72px; margin-left: 20px; font-size: 23px; }
.t-time { width: 94px; font-size: 23px; }
.peek { width: 2px; height: 60px; margin: 0 8px 0 40px; background: #6b6b6b; }
```
